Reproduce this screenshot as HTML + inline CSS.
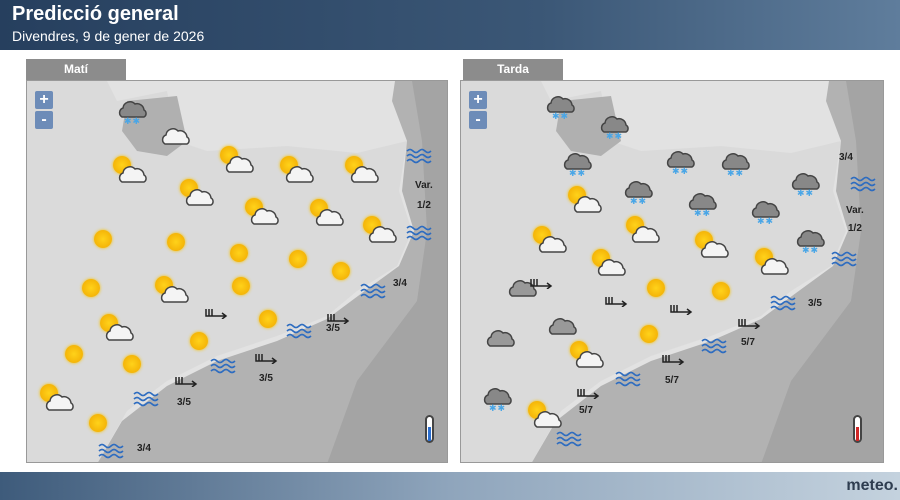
<!DOCTYPE html>
<html><head><meta charset="utf-8"><style>
*{margin:0;padding:0;box-sizing:border-box}
body{width:900px;height:500px;overflow:hidden;background:#fff;font-family:"Liberation Sans",sans-serif;position:relative}
#hdr{position:absolute;left:0;top:0;width:900px;height:50px;background:linear-gradient(90deg,#263f5e,#3b5776 60%,#5f7d9c)}
#hdr h1{position:absolute;left:12px;top:3px;color:#fff;font-size:20px;font-weight:bold}
#hdr p{position:absolute;left:12px;top:28px;color:#fff;font-size:14px}
#ftr{position:absolute;left:0;top:472px;width:900px;height:28px;background:linear-gradient(90deg,#3e5b7b,#8fa5bc 50%,#c4d2de)}
#ftr span{position:absolute;right:2px;top:5px;font-size:16px;font-weight:bold;color:#2e3d50}
.tab{position:absolute;top:59px;height:21px;width:100px;background:#8c8c8c;color:#fff;font-weight:bold;font-size:12px;text-align:center;line-height:21px}
.map{position:absolute;top:80px;height:383px;border:1px solid #999;background:#dcdcdc;overflow:hidden}
.btn{position:absolute;left:8px;width:18px;height:18px;background:#6d8cb8;color:#fff;font-weight:bold;font-size:16px;text-align:center;line-height:17px;border-radius:2px}
.t{position:absolute;font-size:10px;font-weight:bold;color:#222}
</style></head><body>
<div id="hdr"><h1>Predicció general</h1><p>Divendres, 9 de gener de 2026</p></div>
<div class="tab" style="left:26px">Matí</div>
<div class="tab" style="left:463px">Tarda</div>
<div class="map" id="m1" style="left:26px;width:422px"></div>
<div class="map" id="m2" style="left:460px;width:424px"></div>
<div id="ftr"><span>meteo.</span></div>
<script>
function svgBase(w){return '<svg width="'+w+'" height="383" style="position:absolute;left:0;top:0">'+
'<rect width="'+w+'" height="383" fill="#e2e2e2"/>'+
'<polygon points="90,20 140,10 150,60 180,70 260,65 330,72 380,60 372,110 385,150 370,185 330,210 300,235 250,255 190,275 140,300 100,330 70,383 0,383 0,0 80,0" fill="#d6d6d6" opacity="0.6"/>'+
'<polygon points="100,20 150,15 160,60 140,75 110,70 95,50" fill="#b0b0b0"/>'+
'<polygon points="368,0 '+w+',0 '+w+',383 70,383 95,340 140,305 190,280 250,260 300,238 335,212 372,185 387,150 375,110 380,60 365,20" fill="#b2b2b2"/>'+
'<polygon points="385,0 '+w+',0 '+w+',383 300,383 330,300 390,220 400,150 395,60" fill="#a4a4a4"/>'+
'</svg>';}
function sun(x,y){return '<div style="position:absolute;left:'+(x-9)+'px;top:'+(y-9)+'px;width:18px;height:18px;border-radius:50%;background:radial-gradient(#ffd21a,#f0a800);box-shadow:0 0 3px #f7c400"></div>';}
function cloud(x,y,c){c=c||'#f4f4f4';return '<svg style="position:absolute;left:'+(x-16)+'px;top:'+(y-10)+'px" width="32" height="20"><path d="M5 18 A5 5 0 0 1 6 9 A7 7 0 0 1 18 5 A7 7 0 0 1 27 11 A4 4 0 0 1 27 18 Z" fill="'+c+'" stroke="#444" stroke-width="1.5"/></svg>';}
function sc(x,y){return sun(x-7,y-6)+cloud(x+4,y+3);}
function snow(x,y){return cloud(x,y,'#888')+'<div style="position:absolute;left:'+(x-9)+'px;top:'+(y+7)+'px;color:#4aa6e6;font-size:9px;letter-spacing:1px">✱✱</div>';}
function waves(x,y){var p='';for(var i=0;i<3;i++){var yy=3+i*5;p+='<path d="M1 '+yy+' q3 -3 6 0 t6 0 t6 0 t6 0" stroke="#2d6cc0" stroke-width="1.6" fill="none"/>';}
return '<svg style="position:absolute;left:'+(x-13)+'px;top:'+(y-8)+'px" width="26" height="16">'+p+'</svg>';}
function wind(x,y){return '<svg style="position:absolute;left:'+(x-12)+'px;top:'+(y-6)+'px" width="26" height="12"><path d="M2 2 V9 H22 M18 6 L22 9 L18 12 M5 2 V9 M8 2 V9" stroke="#222" stroke-width="1.5" fill="none"/></svg>';}
function txt(x,y,s){return '<div class="t" style="left:'+(x-10)+'px;top:'+(y-6)+'px">'+s+'</div>';}
function therm(x,y,c){return '<div style="position:absolute;left:'+(x-4)+'px;top:'+(y-16)+'px;width:9px;height:28px;border:2px solid #444;border-radius:5px;background:#fff"><div style="position:absolute;left:1px;bottom:0;width:3px;height:14px;background:'+c+'"></div></div>';}
var m1=document.getElementById('m1'),m2=document.getElementById('m2');
var h=svgBase(422),ox=26,oy=80;
function P(f,x,y,a){return f(x-ox,y-oy,a);}
[[128,170],[235,160],[295,170],[360,170],[195,193],[260,212],[325,213],[378,230],[115,328],[170,290],[55,398]].forEach(p=>h+=P(sc,p[0],p[1]));
h+=P(snow,132,108)+P(cloud,175,135);
[[102,238],[175,241],[238,252],[297,258],[340,270],[240,285],[267,318],[90,287],[198,340],[73,353],[131,363],[97,422]].forEach(p=>h+=P(sun,p[0],p[1]));
[[418,155],[418,232],[372,290],[298,330],[222,365],[145,398],[110,450]].forEach(p=>h+=P(waves,p[0],p[1]));
[[215,312],[337,317],[265,357],[185,380]].forEach(p=>h+=P(wind,p[0],p[1]));
h+=P(txt,424,185,'Var.')+P(txt,426,205,'1/2')+P(txt,402,283,'3/4')+P(txt,335,328,'3/5')+P(txt,268,378,'3/5')+P(txt,186,402,'3/5')+P(txt,146,448,'3/4');
h+=P(therm,428,430,'#2c6fd0');
h+='<div class="btn" style="top:10px">+</div><div class="btn" style="top:30px">-</div>';
m1.innerHTML=h;
h=svgBase(424);ox=460;
[[560,103],[614,123],[577,160],[680,158],[735,160],[638,188],[702,200],[805,180],[765,208],[810,237],[497,395]].forEach(p=>h+=P(snow,p[0],p[1]));
[[583,200],[548,240],[607,263],[641,230],[710,245],[770,262],[585,355],[543,415]].forEach(p=>h+=P(sc,p[0],p[1]));
h+=P(cloud,522,287,'#999')+P(cloud,562,325,'#999')+P(cloud,500,337,'#999');
[[655,287],[720,290],[648,333]].forEach(p=>h+=P(sun,p[0],p[1]));
[[862,183],[843,258],[782,302],[713,345],[627,378],[568,438]].forEach(p=>h+=P(waves,p[0],p[1]));
[[540,282],[615,300],[680,308],[748,322],[672,358],[587,392]].forEach(p=>h+=P(wind,p[0],p[1]));
h+=P(txt,848,157,'3/4')+P(txt,855,210,'Var.')+P(txt,857,228,'1/2')+P(txt,817,303,'3/5')+P(txt,750,342,'5/7')+P(txt,674,380,'5/7')+P(txt,588,410,'5/7');
h+=P(therm,856,430,'#d02828');
h+='<div class="btn" style="top:10px">+</div><div class="btn" style="top:30px">-</div>';
m2.innerHTML=h;
</script>
</body></html>
